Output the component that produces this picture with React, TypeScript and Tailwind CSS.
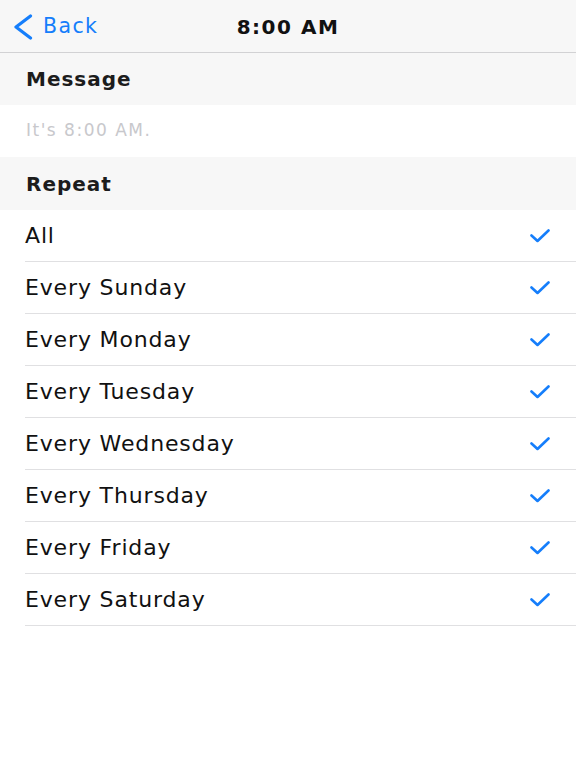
import React from "react";

const days = [
  "All",
  "Every Sunday",
  "Every Monday",
  "Every Tuesday",
  "Every Wednesday",
  "Every Thursday",
  "Every Friday",
  "Every Saturday",
];

function Check() {
  return (
    <svg width="20" height="14" viewBox="0 0 20 14" fill="none">
      <path
        d="M1.5 6.5 L7.5 12 L18.5 1.5"
        stroke="#157efb"
        strokeWidth="2.6"
        strokeLinecap="round"
        strokeLinejoin="round"
      />
    </svg>
  );
}

export default function App() {
  return (
    <div
      className="w-[576px] h-[768px] bg-white text-black"
      style={{ fontFamily: '"DejaVu Sans", sans-serif' }}
    >
      <header className="relative h-[53px] bg-[#f7f7f7] border-b border-[#d2d2d4] flex items-center">
        <button className="flex items-center gap-[10px] pl-[13px] pt-[1px] text-[#157efb]">
          <svg width="20" height="26" viewBox="0 0 20 26" fill="none">
            <path
              d="M17.5 2 L3 13 L17.5 24"
              stroke="#157efb"
              strokeWidth="3.2"
              strokeLinecap="round"
              strokeLinejoin="round"
            />
          </svg>
          <span className="text-[20.5px] tracking-[1.4px] leading-none">Back</span>
        </button>
        <h1 className="absolute left-0 right-0 top-[17px] text-center text-[20px] font-bold tracking-[1.5px] leading-none pointer-events-none text-[#111]">
          8:00 AM
        </h1>
      </header>

      <div className="h-[52px] bg-[#f7f7f7] flex items-center pl-[26px]">
        <span className="text-[20px] font-bold tracking-[1px] text-[#1c1c1c]">Message</span>
      </div>
      <div className="h-[52px] bg-white flex items-center pl-[26px]">
        <span className="text-[17px] tracking-[1.5px] text-[#c8c8cc]">It's 8:00 AM.</span>
      </div>

      <div className="h-[53px] bg-[#f7f7f7] flex items-center pl-[26px]">
        <span className="text-[20px] font-bold tracking-[1px] text-[#1c1c1c]">Repeat</span>
      </div>

      <ul className="pl-[25px]">
        {days.map((d) => (
          <li
            key={d}
            className="h-[52px] border-b border-[#e0e0e2] flex items-center justify-between pr-[26px]"
          >
            <span className="text-[22px] tracking-[0.85px] text-[#111]">{d}</span>
            <Check />
          </li>
        ))}
      </ul>
    </div>
  );
}
